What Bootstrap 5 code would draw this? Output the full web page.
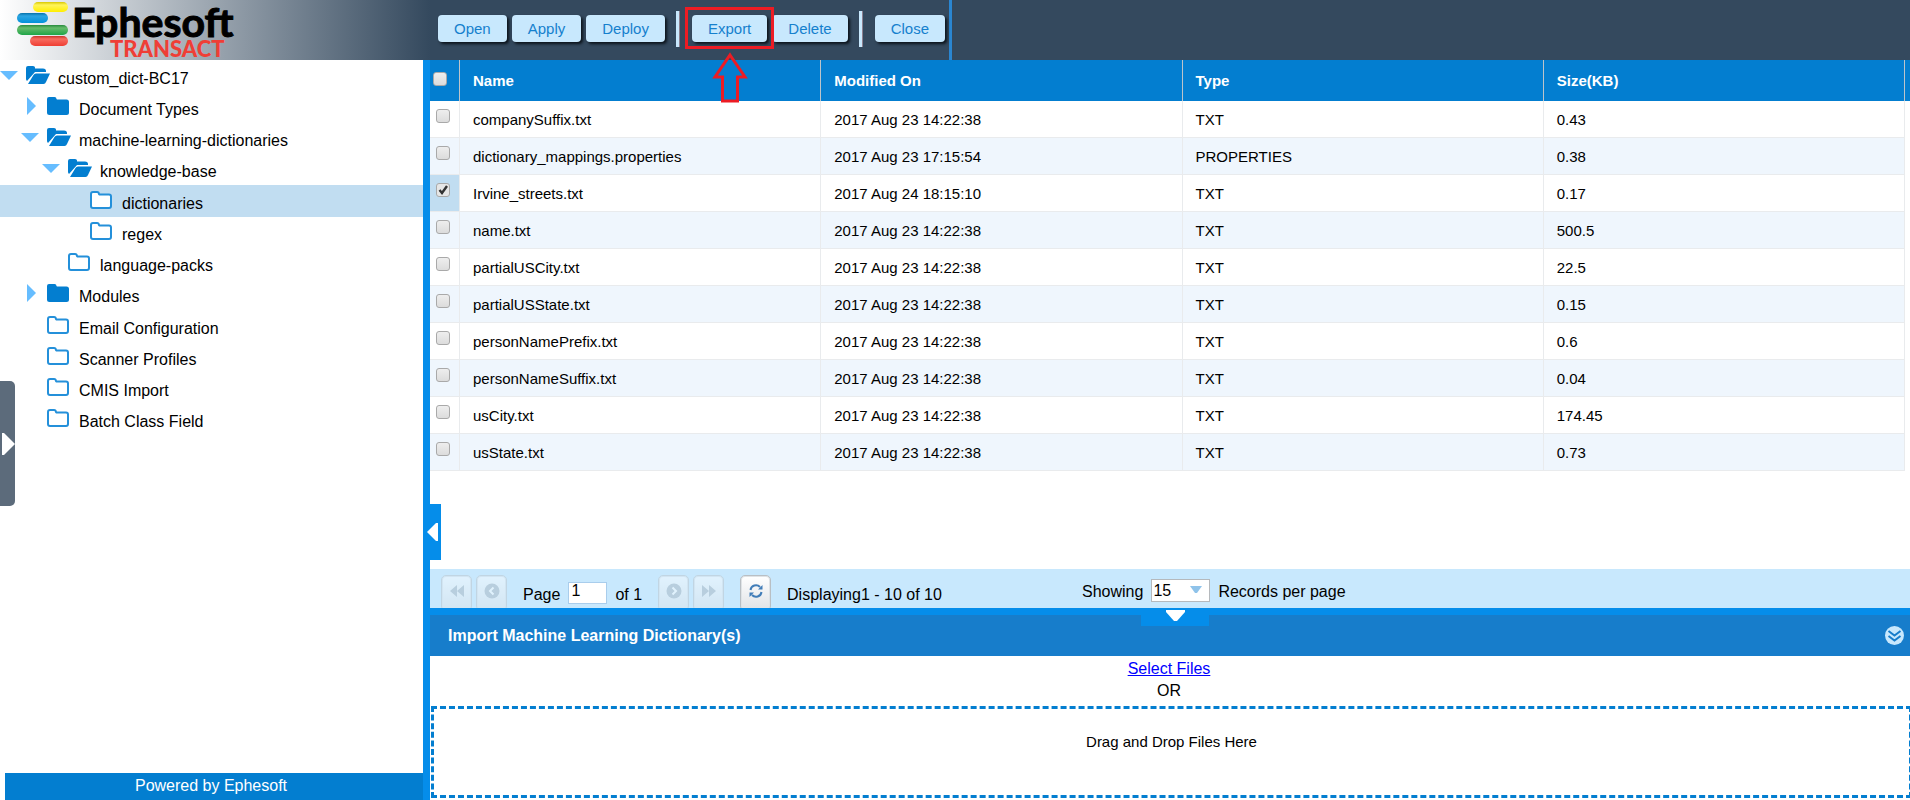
<!DOCTYPE html>
<html lang="en">
<head>
<meta charset="utf-8">
<meta name="viewport" content="width=device-width, initial-scale=1">
<title>Ephesoft Transact</title>
<link href="https://cdn.jsdelivr.net/npm/bootstrap@5.3.0/dist/css/bootstrap.min.css" rel="stylesheet">
<style>
:root { --blue: #037ed0; --bright: #058dea; --pale: #c8e8fd; --slate: #34495e; }
body { font-family: "Liberation Sans", Arial, sans-serif; font-size: 16px; line-height: 20px; color: #000; background: #fff; }

/* top bar */
.topbar { height: 60px; background: var(--slate); }
.brand { width: 430px; background: linear-gradient(90deg, #fff, var(--slate)); }
.brand svg { display: block; overflow: visible; }
.toolbar { gap: 5px; padding: 0 4px 3px 8px; border-right: 3px solid #2a86d1; }
.tool-btn { height: 27px; padding: 0 16px; border: 0; border-radius: 4px; background: var(--pale); color: #1580cd; font-size: 15px; line-height: 27px; box-shadow: 2px 2px 3px #0b131b; }
.tool-sep { width: 4px; height: 36px; margin: 0 7px 0 6px; background: var(--pale); border-right: 1px solid #8d7f8e; }
.callout-box { position: absolute; inset: -8px -7px -7px -7px; border: 3px solid #ec1c24; pointer-events: none; }
.callout-arrow { position: absolute; top: 37px; left: 50%; margin-left: -18px; z-index: 5; pointer-events: none; }

/* tree */
.sidebar { width: 430px; border-right: 7px solid var(--bright); }
.tree { padding-top: 1px; }
.tree a { height: 31px; color: #000; text-decoration: none; }
.tree a.active { background: #c1ddf1; }
.tree a.first-leaf { height: 32px; padding-top: 1px; }
.tree .caret { width: 18px; height: 18px; margin: 0 8px 3px 0; }
.tree .folder { width: 24px; height: 20px; margin: 0 8px 3px 0; }
.tree span { padding-top: 4px; }
.lv1 { padding-left: 21px; } .lv2 { padding-left: 42px; } .lv3 { padding-left: 64px; }
.powered { height: 27px; margin-left: 5px; padding-right: 6px; background: var(--blue); color: #fff; line-height: 25px; }
.drawer-tab { position: absolute; left: 0; top: 321px; width: 15px; height: 125px; padding: 0; border: 0; border-radius: 0 5px 5px 0; background: #5c6b7b; }
.split-tab { position: absolute; left: 423px; top: 444px; width: 18px; height: 56px; padding: 0; border: 0; background: var(--bright); z-index: 3; }

/* grid */
.grid { table-layout: fixed; font-size: 15px; border-collapse: separate; border-spacing: 0; }
.grid th { height: 41px; padding: 0 13px; background: var(--blue); color: #fff; border-right: 1px solid #bcc4ca; vertical-align: middle; }
.grid th:last-child { border-right: 0; padding: 0; }
.grid td { height: 37px; padding: 1px 13px 0; border-right: 1px solid #e9ebed; border-bottom: 1px solid #e9ebed; vertical-align: middle; }
.grid td:last-child { border: 0; background: #fff; padding: 0; }
.grid tbody tr:nth-child(even) td:not(:last-child) { background: #eff6fd; }
.grid th:first-child, .grid td:first-child { padding: 0 0 6px 6px; line-height: 1; }
.grid th:first-child { padding: 0 0 4px 3px; }
.grid tbody tr.picked td:first-child { background: #c1ddf1; }
.tick { appearance: none; display: block; width: 14px; height: 14px; margin: 0; border: 1px solid #a9a9a9; border-radius: 3px; background: linear-gradient(#eee, #dcdcdc); }
.tick:checked { background: url("data:image/svg+xml,%3Csvg xmlns='http://www.w3.org/2000/svg' viewBox='0 0 12 12'%3E%3Cpath d='M2.5 6l2.5 3 5-7' fill='none' stroke='%23333' stroke-width='2.4'/%3E%3C/svg%3E") center/12px no-repeat, #e6e6e6; }

/* pager */
.pager { height: 39px; overflow: hidden; background: var(--pale); padding-left: 11px; }
.pg-btn { flex: none; width: 31px; height: 36px; margin-top: 6px; padding: 0 0 4px; border: 1px solid #b9bfc4; border-radius: 5px; background: linear-gradient(#fff, #e3e5e8 92%); color: #417db8; box-shadow: inset 0 0 0 1px #dfe3e6; }
.pg-btn:disabled { opacity: .45; color: #a5b0b9; }
.pg-btn svg, .drawer-tab svg, .split-tab svg { display: block; margin: auto; }
.pg-input { width: 39px; height: 22px; padding: 0 2px 3px; border: 1px solid #a9cdec; background: #fff; line-height: 17px; }
.pg-label { padding-top: 16px; }
.pg-records { position: absolute; left: 652px; top: 0; gap: 8px; padding-top: 10px; }
.pg-records label { padding-top: 3px; }
.pg-select { appearance: none; width: 59px; height: 23px; padding: 0 1px; border: 1px solid #b5b9bd; border-radius: 0; color: #000; line-height: 19px; background: #fff url("data:image/svg+xml,%3Csvg xmlns='http://www.w3.org/2000/svg' width='12' height='7'%3E%3Cpath d='M0 0h12L7 7H5z' fill='%238fc3ea'/%3E%3C/svg%3E") right 7px top 6px no-repeat; }

/* import panel */
.hsplit { height: 7px; background: var(--bright); }
.hsplit button { position: absolute; top: 0; left: 50%; width: 68px; height: 18px; margin-left: -29px; padding: 0 0 3px; border: 0; background: var(--bright); z-index: 2; }
.hsplit svg { display: block; margin: auto; }
.panel-bar { height: 41px; padding: 0 6px 0 18px; background: #177dcb; color: #fff; }
.panel-bar h2 { font-size: 16px; line-height: 20px; }
.panel-bar button { padding: 0; border: 0; background: none; }
.pick { line-height: 22px; padding: 2px 2px 4px 0; }
.pick a { color: #00f; }
.drop { height: 92px; margin: 0 -2px 2px 1px; border: 3px dashed var(--blue); font-size: 15px; padding-top: 23px; }
</style>
</head>
<body class="d-flex flex-column vh-100 overflow-hidden">

<svg class="d-none" xmlns="http://www.w3.org/2000/svg">
  <symbol id="f-open" viewBox="0 0 24 20"><path d="M2 1h5q2 0 2 1.500v1h8q3 0 3 2.500v1H9L1 16q-1-1-1-2V3q0-2 2-2z" fill="#037ed0"/><path d="M10 8.500h14L20 17q-.7 2-2.500 2H2L7.500 10q.8-1.500 2.500-1.500z" fill="#037ed0"/></symbol>
  <symbol id="f-closed" viewBox="0 0 24 20"><path d="M2 1h5.500q2 0 2 2l.5.500h9.500q2.500 0 2.500 2.500v10.500q0 2.500-2.500 2.500h-17Q0 19 0 16.500V3q0-2 2-2z" fill="#037ed0"/></symbol>
  <symbol id="f-leaf" viewBox="0 0 24 20"><path d="M3 2h4q1.800 0 2 2l.5.600h9.500q2 0 2 2v9.400q0 2-2 2H3q-2 0-2-2V4q0-2 2-2z" fill="#fff" stroke="#2490da" stroke-width="2"/></symbol>
  <symbol id="c-open" viewBox="0 0 18 18"><path d="M0 5h18L9 14z" fill="#66bdff"/></symbol>
  <symbol id="c-closed" viewBox="0 0 18 18"><path d="M6 0l9 9-9 9z" fill="#66bdff"/></symbol>
</svg>

<header class="topbar d-flex flex-shrink-0">
  <div class="brand flex-shrink-0">
    <svg width="260" height="60" role="img" aria-label="Ephesoft Transact">
      <defs>
        <linearGradient id="gy" x2="0" y2="1"><stop stop-color="#d8c800"/><stop offset=".3" stop-color="#fff45a"/><stop offset="1" stop-color="#ffee00"/></linearGradient>
        <linearGradient id="gb" x2="0" y2="1"><stop stop-color="#0672ab"/><stop offset=".3" stop-color="#2ba5e2"/><stop offset="1" stop-color="#0391da"/></linearGradient>
        <linearGradient id="gg" x2="0" y2="1"><stop stop-color="#278a3c"/><stop offset=".3" stop-color="#66bb6a"/><stop offset="1" stop-color="#1fa548"/></linearGradient>
        <linearGradient id="gr" x2="0" y2="1"><stop stop-color="#c8342a"/><stop offset=".3" stop-color="#f76c60"/><stop offset="1" stop-color="#ef3e33"/></linearGradient>
      </defs>
      <rect x="33" y="2" width="35" height="10" rx="5" fill="url(#gy)"/>
      <rect x="17" y="13" width="31" height="10" rx="5" fill="url(#gb)"/>
      <rect x="17" y="25" width="51" height="10" rx="5" fill="url(#gg)"/>
      <rect x="30" y="36" width="38" height="10" rx="5" fill="url(#gr)"/>
      <text x="72" y="37" font-family="Lato, sans-serif" font-weight="700" font-size="41" fill="#000" stroke="#000">Ephesoft</text>
      <text x="110" y="57" font-family="Lato, sans-serif" font-weight="900" font-size="22" fill="#ef3e36">TRANSACT</text>
    </svg>
  </div>
  <nav class="toolbar d-flex align-items-center" aria-label="Batch class actions">
    <button type="button" class="tool-btn">Open</button>
    <button type="button" class="tool-btn">Apply</button>
    <button type="button" class="tool-btn">Deploy</button>
    <div class="tool-sep"></div>
    <div class="position-relative">
      <button type="button" class="tool-btn">Export</button>
      <div class="callout-box"></div>
      <svg class="callout-arrow" width="36" height="52" viewBox="0 0 36 52"><path d="M18 3L33 25H25.500V49H10.500V25H3z" fill="none" stroke="#ec1c24" stroke-width="3"/></svg>
    </div>
    <button type="button" class="tool-btn">Delete</button>
    <div class="tool-sep"></div>
    <button type="button" class="tool-btn">Close</button>
  </nav>
</header>

<main class="d-flex flex-grow-1 position-relative" style="min-height:0">
  <aside class="sidebar d-flex flex-column flex-shrink-0">
    <ul class="tree list-unstyled mb-0 flex-grow-1">
      <li><a href="#" class="d-flex align-items-center"><svg class="caret"><use href="#c-open"/></svg><svg class="folder"><use href="#f-open"/></svg><span>custom_dict-BC17</span></a></li>
      <li><a href="#" class="d-flex align-items-center lv1"><svg class="caret"><use href="#c-closed"/></svg><svg class="folder"><use href="#f-closed"/></svg><span>Document Types</span></a></li>
      <li><a href="#" class="d-flex align-items-center lv1"><svg class="caret"><use href="#c-open"/></svg><svg class="folder"><use href="#f-open"/></svg><span>machine-learning-dictionaries</span></a></li>
      <li><a href="#" class="d-flex align-items-center lv2"><svg class="caret"><use href="#c-open"/></svg><svg class="folder"><use href="#f-open"/></svg><span>knowledge-base</span></a></li>
      <li><a href="#" class="d-flex align-items-center lv3 active first-leaf"><svg class="caret"></svg><svg class="folder"><use href="#f-leaf"/></svg><span>dictionaries</span></a></li>
      <li><a href="#" class="d-flex align-items-center lv3"><svg class="caret"></svg><svg class="folder"><use href="#f-leaf"/></svg><span>regex</span></a></li>
      <li><a href="#" class="d-flex align-items-center lv2"><svg class="caret"></svg><svg class="folder"><use href="#f-leaf"/></svg><span>language-packs</span></a></li>
      <li><a href="#" class="d-flex align-items-center lv1"><svg class="caret"><use href="#c-closed"/></svg><svg class="folder"><use href="#f-closed"/></svg><span>Modules</span></a></li>
      <li><a href="#" class="d-flex align-items-center lv1 first-leaf"><svg class="caret"></svg><svg class="folder"><use href="#f-leaf"/></svg><span>Email Configuration</span></a></li>
      <li><a href="#" class="d-flex align-items-center lv1"><svg class="caret"></svg><svg class="folder"><use href="#f-leaf"/></svg><span>Scanner Profiles</span></a></li>
      <li><a href="#" class="d-flex align-items-center lv1"><svg class="caret"></svg><svg class="folder"><use href="#f-leaf"/></svg><span>CMIS Import</span></a></li>
      <li><a href="#" class="d-flex align-items-center lv1"><svg class="caret"></svg><svg class="folder"><use href="#f-leaf"/></svg><span>Batch Class Field</span></a></li>
    </ul>
    <div class="powered text-center">Powered by Ephesoft</div>
  </aside>
  <button type="button" class="drawer-tab" aria-label="Open drawer"><svg width="14" height="24"><path d="M1 1h2l11 11L3 23H1z" fill="#fff"/></svg></button>
  <button type="button" class="split-tab" aria-label="Collapse tree"><svg width="11" height="18"><path d="M11 0H9L0 9l9 9h2z" fill="#fff"/></svg></button>

  <section class="d-flex flex-column flex-grow-1" style="min-width:0">
    <div class="flex-grow-1">
      <table class="grid w-100">
        <colgroup><col style="width:30px"><col><col><col><col><col style="width:5px"></colgroup>
        <thead><tr><th><input type="checkbox" class="tick" aria-label="Select all"></th><th>Name</th><th>Modified On</th><th>Type</th><th>Size(KB)</th><th></th></tr></thead>
        <tbody>
          <tr><td><input type="checkbox" class="tick" aria-label="companySuffix.txt"></td><td>companySuffix.txt</td><td>2017 Aug 23 14:22:38</td><td>TXT</td><td>0.43</td><td></td></tr>
          <tr><td><input type="checkbox" class="tick" aria-label="dictionary_mappings.properties"></td><td>dictionary_mappings.properties</td><td>2017 Aug 23 17:15:54</td><td>PROPERTIES</td><td>0.38</td><td></td></tr>
          <tr class="picked"><td><input type="checkbox" class="tick" checked aria-label="Irvine_streets.txt"></td><td>Irvine_streets.txt</td><td>2017 Aug 24 18:15:10</td><td>TXT</td><td>0.17</td><td></td></tr>
          <tr><td><input type="checkbox" class="tick" aria-label="name.txt"></td><td>name.txt</td><td>2017 Aug 23 14:22:38</td><td>TXT</td><td>500.5</td><td></td></tr>
          <tr><td><input type="checkbox" class="tick" aria-label="partialUSCity.txt"></td><td>partialUSCity.txt</td><td>2017 Aug 23 14:22:38</td><td>TXT</td><td>22.5</td><td></td></tr>
          <tr><td><input type="checkbox" class="tick" aria-label="partialUSState.txt"></td><td>partialUSState.txt</td><td>2017 Aug 23 14:22:38</td><td>TXT</td><td>0.15</td><td></td></tr>
          <tr><td><input type="checkbox" class="tick" aria-label="personNamePrefix.txt"></td><td>personNamePrefix.txt</td><td>2017 Aug 23 14:22:38</td><td>TXT</td><td>0.6</td><td></td></tr>
          <tr><td><input type="checkbox" class="tick" aria-label="personNameSuffix.txt"></td><td>personNameSuffix.txt</td><td>2017 Aug 23 14:22:38</td><td>TXT</td><td>0.04</td><td></td></tr>
          <tr><td><input type="checkbox" class="tick" aria-label="usCity.txt"></td><td>usCity.txt</td><td>2017 Aug 23 14:22:38</td><td>TXT</td><td>174.45</td><td></td></tr>
          <tr><td><input type="checkbox" class="tick" aria-label="usState.txt"></td><td>usState.txt</td><td>2017 Aug 23 14:22:38</td><td>TXT</td><td>0.73</td><td></td></tr>
        </tbody>
      </table>
    </div>

    <div class="pager d-flex align-items-start flex-shrink-0 position-relative">
      <button type="button" class="pg-btn" disabled aria-label="First page"><svg width="14" height="12"><path d="M7 0v12L0 6zM14 0v12L7 6z" fill="currentColor"/></svg></button>
      <button type="button" class="pg-btn ms-1" disabled aria-label="Previous page"><svg width="16" height="16"><circle cx="8" cy="8" r="7.500" fill="currentColor"/><path d="M9.500 4.500L6 8l3.500 3.500" fill="none" stroke="#fff" stroke-width="2"/></svg></button>
      <label class="pg-label ms-3" for="page">Page</label>
      <input id="page" class="pg-input ms-2 mt-2 align-self-center" value="1">
      <span class="pg-label ms-2">of 1</span>
      <button type="button" class="pg-btn ms-3" disabled aria-label="Next page"><svg width="16" height="16"><circle cx="8" cy="8" r="7.500" fill="currentColor"/><path d="M6.500 4.500L10 8l-3.500 3.500" fill="none" stroke="#fff" stroke-width="2"/></svg></button>
      <button type="button" class="pg-btn ms-1" disabled aria-label="Last page"><svg width="14" height="12"><path d="M0 0l7 6-7 6zM7 0l7 6-7 6z" fill="currentColor"/></svg></button>
      <button type="button" class="pg-btn ms-3" aria-label="Refresh"><svg width="14" height="14" viewBox="0 0 14 14"><path d="M1.500 6A5.500 5.500 0 0 1 11 3M12.500 8A5.500 5.500 0 0 1 3 11" fill="none" stroke="currentColor" stroke-width="2"/><path d="M13.500 1v4.500H9zM.5 13V8.500H5z" fill="currentColor"/></svg></button>
      <span class="pg-label ms-3">Displaying1 - 10 of 10</span>
      <div class="pg-records d-flex">
        <label for="per">Showing</label>
        <select id="per" class="pg-select"><option>15</option><option>25</option><option>50</option></select>
        <label for="per">Records per page</label>
      </div>
    </div>

    <div class="hsplit flex-shrink-0 position-relative"><button type="button" aria-label="Collapse import panel"><svg width="19" height="11"><path d="M0 0h19v2l-8 9H8L0 2z" fill="#fff"/></svg></button></div>
    <div class="panel-bar d-flex align-items-center justify-content-between flex-shrink-0">
      <h2 class="fw-bold mb-0">Import Machine Learning Dictionary(s)</h2>
      <button type="button" aria-label="Collapse"><svg class="d-block" width="19" height="19"><circle cx="9.500" cy="9.500" r="9.500" fill="#c8e8fd"/><path d="M3.500 5l6 4.500 6-4.500M3.500 10l6 4.500 6-4.500" fill="none" stroke="#177dcb" stroke-width="2"/></svg></button>
    </div>
    <div class="pick text-center"><a href="#">Select Files</a><div>OR</div></div>
    <div class="drop text-center flex-shrink-0">Drag and Drop Files Here</div>
  </section>
</main>
<script src="https://cdn.jsdelivr.net/npm/bootstrap@5.3.0/dist/js/bootstrap.bundle.min.js"></script>
</body>
</html>
